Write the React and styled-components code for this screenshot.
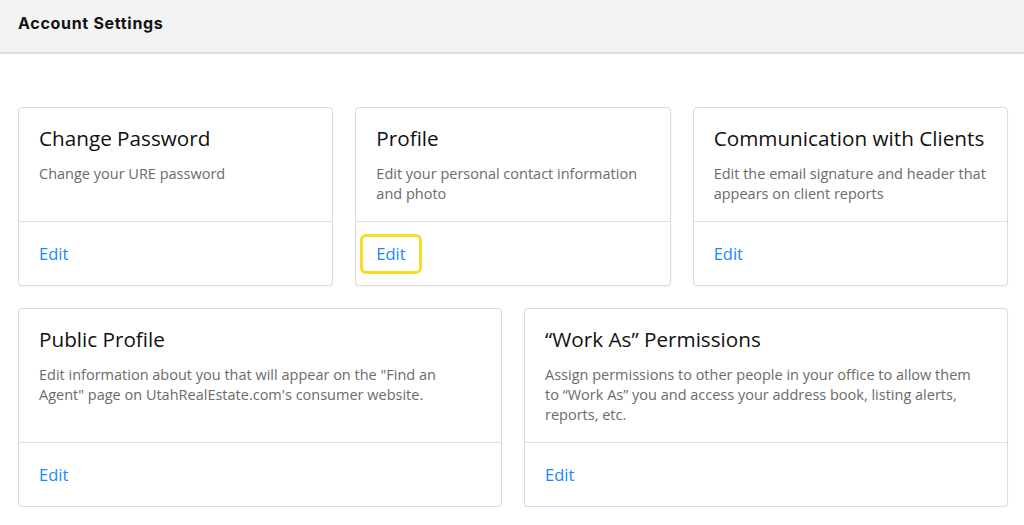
import React from "react";
import styled, { createGlobalStyle } from "styled-components";

const GlobalStyle = createGlobalStyle`
  body {
    margin: 0;
    background: #fff;
    font-family: "Open Sans", "Liberation Sans", sans-serif;
  }
`;

const topCards = [
  { title: "Change Password", text: "Change your URE password" },
  { title: "Profile", text: "Edit your personal contact information and photo", active: true },
  {
    title: "Communication with Clients",
    text: "Edit the email signature and header that appears on client reports",
  },
];

const bottomCards = [
  {
    title: "Public Profile",
    text: 'Edit information about you that will appear on the "Find an Agent" page on UtahRealEstate.com\'s consumer website.',
  },
  {
    title: "\u201CWork As\u201D Permissions",
    text: "Assign permissions to other people in your office to allow them to \u201CWork As\u201D you and access your address book, listing alerts, reports, etc.",
  },
];

const SettingsCard = ({ title, text, active }) => (
  <Card>
    <CardBody>
      <CardTitle>{title}</CardTitle>
      <CardText>{text}</CardText>
    </CardBody>
    <CardFooter>
      <EditLink href="#" $active={active}>
        Edit
      </EditLink>
    </CardFooter>
  </Card>
);

const App = () => {
  return (
    <>
      <GlobalStyle />
      <Header>
        <HeaderTitle>Account Settings</HeaderTitle>
      </Header>
      <Content>
        <CardRow $cols={3}>
          {topCards.map((c) => (
            <SettingsCard key={c.title} {...c} />
          ))}
        </CardRow>
        <CardRow $cols={2}>
          {bottomCards.map((c) => (
            <SettingsCard key={c.title} {...c} />
          ))}
        </CardRow>
      </Content>
    </>
  );
};

export default App;

const Header = styled.header`
  height: 52px;
  display: flex;
  align-items: center;
  padding: 0 18px;
  background: #f3f3f3;
  border-bottom: 2px solid #dedede;
`;

const HeaderTitle = styled.h1`
  margin: -7px 0 0;
  font-family: "Inter", "Liberation Sans", sans-serif;
  font-size: 16px;
  font-weight: 700;
  letter-spacing: 0.7px;
  color: #111;
`;

const Content = styled.main`
  display: flex;
  flex-direction: column;
  gap: 22px;
  padding: 53px 16px 0 18px;
`;

const CardRow = styled.div`
  display: grid;
  grid-template-columns: repeat(${(p) => p.$cols}, 1fr);
  gap: 22px;
`;

const Card = styled.section`
  display: flex;
  flex-direction: column;
  border: 1px solid #dcdcdc;
  border-radius: 4px;
  box-shadow: 0 1px 2px rgba(0, 0, 0, 0.06);
  background: #fff;
`;

const CardBody = styled.div`
  flex: 1;
  padding: 16px 20px 17px;
  border-bottom: 1px solid #e0e0e0;
`;

const CardTitle = styled.h2`
  margin: 0 0 12px;
  font-size: 20.7px;
  font-weight: 400;
  line-height: 28px;
  color: #111;
`;

const CardText = styled.p`
  margin: 0;
  font-size: 14.5px;
  line-height: 20px;
  color: #6b6b6b;
`;

const CardFooter = styled.div`
  height: 63px;
  display: flex;
  align-items: center;
  padding: 0 20px;
`;

const EditLink = styled.a`
  display: inline-block;
  padding: 7px 13px;
  margin-left: -16px;
  border: 3px solid ${(p) => (p.$active ? "#fbd927" : "transparent")};
  border-radius: 6px;
  font-size: 16.5px;
  line-height: 20px;
  color: #1788ff;
  text-decoration: none;
`;
